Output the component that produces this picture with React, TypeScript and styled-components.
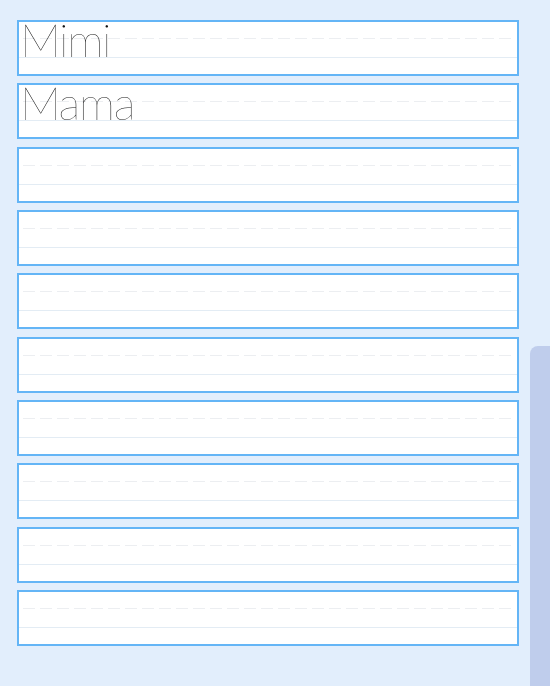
import React from "react";
import styled, { createGlobalStyle } from "styled-components";

const GlobalStyle = createGlobalStyle`
  html, body {
    margin: 0;
    padding: 0;
    background: #e2eefc;
    font-family: "Lato", "Liberation Sans", sans-serif;
  }
`;

const Page = styled.div`
  position: relative;
  width: 550px;
  height: 686px;
  overflow: hidden;
  background: #e2eefc;
`;

const Sheet = styled.div`
  display: flex;
  flex-direction: column;
  gap: 7.33px;
  padding: 20px 0 0 17px;
  width: 502px;
`;

const Row = styled.div`
  position: relative;
  height: 56px;
  box-sizing: border-box;
  border: 2px solid #64b5f6;
  background: #ffffff;
`;

const DashLine = styled.div`
  position: absolute;
  left: 4px;
  right: 6px;
  top: 16px;
  height: 1px;
  background: repeating-linear-gradient(
    to right,
    #eceef1 0 12px,
    transparent 12px 17px
  );
`;

const BaseLine = styled.div`
  position: absolute;
  left: 0;
  right: 0;
  top: 35px;
  height: 1px;
  background: #e3ecf4;
`;

const Word = styled.span`
  position: absolute;
  left: 1px;
  bottom: 11px;
  font-family: "Lato", "Liberation Sans", sans-serif;
  font-weight: 100;
  font-size: 46px;
  line-height: 1;
  color: #111;
  letter-spacing: -1.5px;
  will-change: transform;
  -webkit-font-smoothing: antialiased;
`;

const SidePanel = styled.div`
  position: absolute;
  right: 0;
  top: 346px;
  bottom: 0;
  width: 20px;
  background: #bfcdec;
  border-top-left-radius: 8px;
`;

const words = ["Mimi", "Mama", "", "", "", "", "", "", "", ""];

export default function App() {
  return (
    <Page>
      <GlobalStyle />
      <Sheet>
        {words.map((w, i) => (
          <Row key={i}>
            <DashLine />
            <BaseLine />
            {w && <Word>{w}</Word>}
          </Row>
        ))}
      </Sheet>
      <SidePanel />
    </Page>
  );
}
